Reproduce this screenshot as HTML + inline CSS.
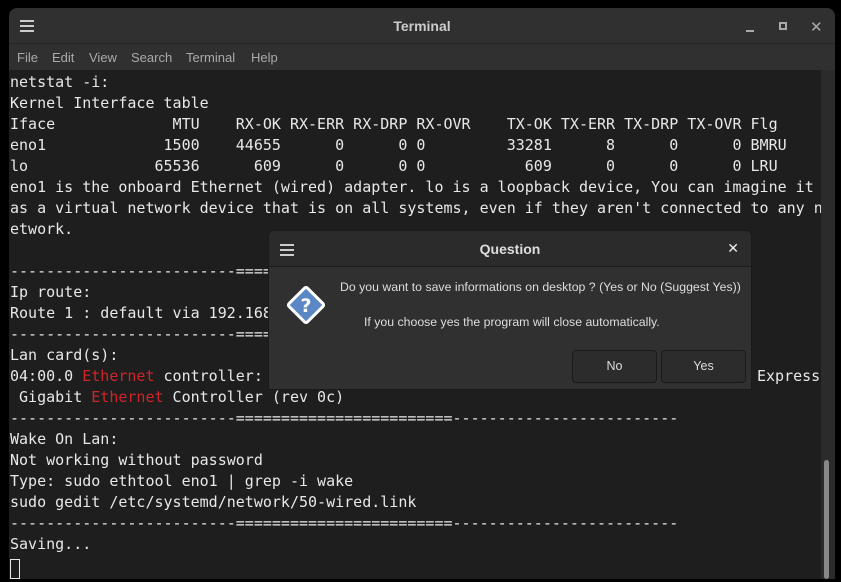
<!DOCTYPE html>
<html><head><style>
*{margin:0;padding:0;box-sizing:border-box}
body{width:841px;height:582px;background:#000;position:relative;overflow:hidden;font-family:"Liberation Sans","DejaVu Sans",sans-serif}
.win{position:absolute;left:9px;top:8px;width:826px;height:571px;background:#303030;border-radius:8px 8px 0 0;overflow:hidden}
.title{position:absolute;left:0;top:0;width:100%;height:36px;border-bottom:1px solid #242424;color:#ccc;font-weight:bold;font-size:14px;text-align:center;line-height:36px}
.menu{position:absolute;left:0;top:37px;height:25px;width:100%;color:#aaa;font-size:13px;line-height:25px}
.menu span{position:absolute}
.term{position:absolute;left:0;top:62px;width:812px;height:509px;background:#1e1e1e}
.sb{position:absolute;left:812px;top:62px;width:14px;height:509px;background:#2b2b2b}
.thumb{position:absolute;left:815px;top:452px;width:5px;height:119px;background:#888;border-radius:3px}
pre{position:absolute;left:1px;top:2px;font-family:"DejaVu Sans Mono","Liberation Mono",monospace;font-size:15px;line-height:21px;color:#e8e8e8}
.r{color:#d0242a}
.dlg{position:absolute;left:268px;top:230px;width:484px;height:160px;background:#303030;border:1px solid #1a1a1a;border-radius:6px 6px 0 0;color:#ddd}
.dt{height:36px;border-bottom:1px solid #1e1e1e;background:#2b2b2b;text-align:center;line-height:36px;font-weight:bold;font-size:14px;border-radius:6px 6px 0 0}
.btn{position:absolute;top:119px;width:85px;height:33px;border:1px solid #1a1a1a;border-radius:4px;background:#2c2c2c;text-align:center;line-height:31px;font-size:12.5px}
.ham{position:absolute;width:14px;height:2px;background:#ccc}
</style></head><body>
<div class="win">
<div class="title">Terminal</div>
<div class="ham" style="left:11px;top:12px"></div><div class="ham" style="left:11px;top:17px"></div><div class="ham" style="left:11px;top:22px"></div>
<div style="position:absolute;left:737px;top:22px;width:8px;height:2px;background:#aaa"></div>
<div style="position:absolute;left:770px;top:14px;width:8px;height:8px;border:2px solid #aaa"></div>
<div style="position:absolute;left:801px;top:10px;color:#aaa;font-size:15px;font-weight:bold">✕</div>
<div class="menu"><span style="left:8px">File</span><span style="left:43px">Edit</span><span style="left:80px">View</span><span style="left:122px">Search</span><span style="left:177px">Terminal</span><span style="left:242px">Help</span></div>
<div class="term"><pre>netstat -i:
Kernel Interface table
Iface             MTU    RX-OK RX-ERR RX-DRP RX-OVR    TX-OK TX-ERR TX-DRP TX-OVR Flg
eno1             1500    44655      0      0 0         33281      8      0      0 BMRU
lo              65536      609      0      0 0           609      0      0      0 LRU
eno1 is the onboard Ethernet (wired) adapter. lo is a loopback device, You can imagine it
as a virtual network device that is on all systems, even if they aren't connected to any n
etwork.

-------------------------========================-------------------------
Ip route:
Route 1 : default via 192.168.1.1
-------------------------========================-------------------------
Lan card(s):
04:00.0 <span class="r">Ethernet</span> controller:
 Gigabit <span class="r">Ethernet</span> Controller (rev 0c)
-------------------------========================-------------------------
Wake On Lan:
Not working without password
Type: sudo ethtool eno1 | grep -i wake
sudo gedit /etc/systemd/network/50-wired.link
-------------------------========================-------------------------
Saving...
</pre>
<pre style="left:748px;top:296px">Express</pre>
<div style="position:absolute;left:1px;top:489px;width:10px;height:20px;border:1px solid #e8e8e8"></div>
</div>
<div class="sb"></div><div class="thumb"></div>
</div>
<div class="dlg">
<div class="dt">Question</div>
<div class="ham" style="left:11px;top:13px"></div><div class="ham" style="left:11px;top:18px"></div><div class="ham" style="left:11px;top:23px"></div>
<div style="position:absolute;right:12px;top:9px;font-size:14px;font-weight:bold;color:#eee">✕</div>
<svg style="position:absolute;left:15px;top:52px" width="44" height="44" viewBox="0 0 44 44"><rect x="9" y="9" width="26" height="26" transform="rotate(45 22 22)" fill="#5b87c4" stroke="#fff" stroke-width="3" rx="2"/><text x="22" y="29" text-anchor="middle" font-family="DejaVu Sans" font-weight="bold" font-size="19" fill="#fff">?</text></svg>
<div style="position:absolute;left:71px;top:49px;font-size:12.3px">Do you want to save informations on desktop ? (Yes or No (Suggest Yes))</div>
<div style="position:absolute;left:95px;top:84px;font-size:12.3px">If you choose yes the program will close automatically.</div>
<div class="btn" style="left:303px">No</div>
<div class="btn" style="left:392px">Yes</div>
</div>
</body></html>
